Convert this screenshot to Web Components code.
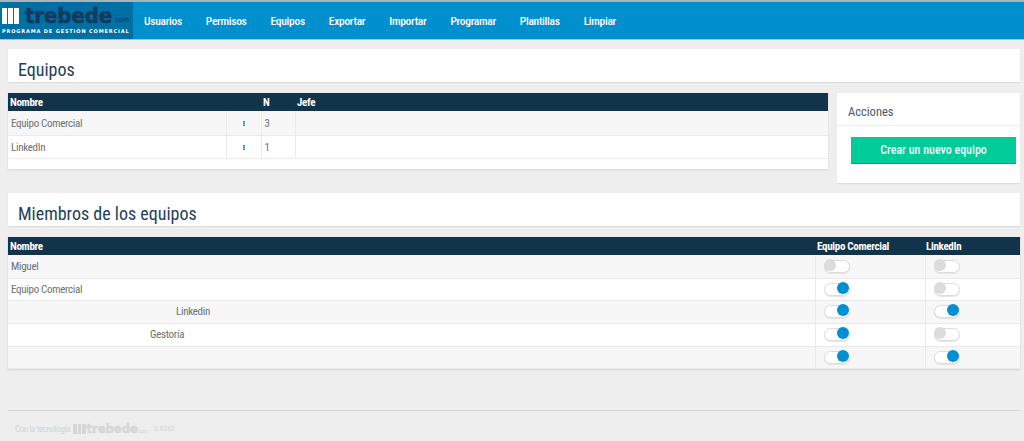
<!DOCTYPE html>
<html lang="es">
<head>
<meta charset="utf-8">
<title>Equipos</title>
<style>
    html, body { margin: 0; background: #eeeeee; }
    body { font-family: Roboto, "Liberation Sans", sans-serif; font-stretch: 75%; }
</style>
</head>
<body>
<app-header></app-header>
<main-area>
    <section-title>Equipos</section-title>
    <teams-row>
        <teams-table></teams-table>
        <actions-card slot="side"></actions-card>
    </teams-row>
    <section-title>Miembros de los equipos</section-title>
    <members-table></members-table>
</main-area>
<app-footer></app-footer>

<script>
const condensed = `font-family: Roboto, "Liberation Sans", sans-serif; font-stretch: 75%;`;

class TrebedeLogo extends HTMLElement {
    connectedCallback() {
        this.attachShadow({mode: 'open'});
        this.shadowRoot.innerHTML = `
        <style>
            :host { display: flex; align-items: flex-end; color: var(--logo-color, #123a5c); font-family: "DejaVu Sans", sans-serif; }
            #bars { display: flex; gap: var(--bar-gap, 1px); margin-right: var(--gap, 6px); }
            #bars i { display: block; width: var(--bar-w, 5px); height: var(--bar-h, 16px); background: var(--bar-color, #fff); }
            b { font-size: var(--size, 22px); line-height: var(--bar-h, 16px); font-weight: 700; letter-spacing: var(--ls, -.1px); -webkit-text-stroke: var(--stroke, .5px) currentColor; }
            small { font-size: var(--com, 8px); line-height: 1; margin-left: 1px; font-family: Roboto, sans-serif; font-stretch: 75%; }
        </style>
        <span id="bars"><i></i><i></i><i></i></span><b>trebede</b><small>.com</small>`;
    }
}

class AppHeader extends HTMLElement {
    connectedCallback() {
        this.attachShadow({mode: 'open'});
        const items = ['Usuarios', 'Permisos', 'Equipos', 'Exportar', 'Importar', 'Programar', 'Plantillas', 'Limpiar'];
        this.shadowRoot.innerHTML = `
        <style>
            :host { display: flex; height: 37px; background: #0090cd; border-top: 2px solid #a9b4ba; border-bottom: 1px solid #a4c4d4; ${condensed} }
            #brand { width: 133px; box-sizing: border-box; background: #006fa3; padding: 6px 0 0 2px; overflow: hidden; }
            #brand p { margin: 4px 0 0; font: 700 5px "DejaVu Sans", sans-serif; letter-spacing: .85px; color: #fff; white-space: nowrap; }
            nav { display: flex; align-items: center; gap: 24px; padding-left: 11px; }
            a { color: #fff; font-size: 11.5px; letter-spacing: -.3px; font-weight: 500; text-decoration: none; }
        </style>
        <div id="brand"><trebede-logo></trebede-logo><p>PROGRAMA DE GESTIÓN COMERCIAL</p></div>
        <nav>${items.map(i => `<a href="#">${i}</a>`).join('')}</nav>`;
    }
}

class MainArea extends HTMLElement {
    connectedCallback() {
        this.attachShadow({mode: 'open'});
        this.shadowRoot.innerHTML = `
        <style>
            :host { display: flex; flex-direction: column; padding: 9px 4px 0 8px; }
        </style>
        <slot></slot>`;
    }
}

class SectionTitle extends HTMLElement {
    connectedCallback() {
        this.attachShadow({mode: 'open'});
        this.shadowRoot.innerHTML = `
        <style>
            :host { display: block; height: 33px; margin-bottom: 11px; box-sizing: border-box; padding: 0 10px; background: #fff; box-shadow: 0 1px 1px #ddd; color: #1f4058; font-size: 18px; line-height: 42px; overflow: hidden; ${condensed} font-stretch: 87%; }
        </style>
        <slot></slot>`;
    }
}

class TeamsRow extends HTMLElement {
    connectedCallback() {
        this.attachShadow({mode: 'open'});
        this.shadowRoot.innerHTML = `
        <style>
            :host { display: flex; align-items: flex-start; gap: 9px; margin-bottom: 10px; }
            ::slotted(teams-table) { flex: 0 0 820px; }
            ::slotted(actions-card) { flex: 1; }
        </style>
        <slot></slot><slot name="side"></slot>`;
    }
}

const tableStyle = `
    table { border-collapse: collapse; width: 100%; table-layout: fixed; ${condensed} font-size: 11px; letter-spacing: -.3px; color: #6f6f6f; }
    th { height: 18px; padding: 0 2px; background: #12344b; color: #fff; font-weight: 700; text-align: left; }
    td { padding: 0 2px 0 3px; border: 1px solid #eaeaea; border-width: 0 1px 1px 0; }
    td:last-child { border-right: 0; }
    tbody tr:nth-child(odd) td { background: #f7f7f7; }
    tbody tr:nth-child(even) td { background: #fff; }
`;

class TeamsTable extends HTMLElement {
    connectedCallback() {
        this.attachShadow({mode: 'open'});
        const teams = [['Equipo Comercial', 3, 24], ['LinkedIn', 1, 23]];
        this.shadowRoot.innerHTML = `
        <style>
            :host { display: block; background: #fff; padding-bottom: 10px; box-shadow: 0 1px 2px #d8d8d8; }
            ${tableStyle}
            td { padding-top: 1px; }
            #dots { display: block; width: 2px; height: 5px; margin: 0 auto; background: repeating-linear-gradient(#0f9be0 0 1px, #6cc4ee 1px 2px); }
        </style>
        <table>
            <colgroup><col style="width:218px"><col style="width:35px"><col style="width:34px"><col></colgroup>
            <thead><tr><th>Nombre</th><th></th><th>N</th><th>Jefe</th></tr></thead>
            <tbody>
            ${teams.map(t => `<tr style="height:${t[2]}px"><td>${t[0]}</td><td><span id="dots"></span></td><td>${t[1]}</td><td></td></tr>`).join('')}
            </tbody>
        </table>`;
    }
}

class ActionsCard extends HTMLElement {
    connectedCallback() {
        this.attachShadow({mode: 'open'});
        this.shadowRoot.innerHTML = `
        <style>
            :host { display: block; height: 90px; background: #fff; box-shadow: 0 1px 1px #ddd; ${condensed} }
            h3 { margin: 0; height: 33px; box-sizing: border-box; padding: 11px 0 0 11px; font-size: 12.5px; line-height: 15px; font-weight: 400; color: #4a5a66; border-bottom: 1px solid #eee; }
            div { padding: 11px 4px 0 14px; }
            button { display: block; width: 100%; height: 27px; border: 0; border-bottom: 1px solid #00a67c; background: #00cc99; color: #eafff8; font: 500 12px Roboto, sans-serif; font-stretch: 75%; }
        </style>
        <h3>Acciones</h3>
        <div><button type="button">Crear un nuevo equipo</button></div>`;
    }
}

class ToggleSwitch extends HTMLElement {
    connectedCallback() {
        this.attachShadow({mode: 'open'});
        this.shadowRoot.innerHTML = `
        <style>
            :host { display: block; position: relative; width: 24px; height: 11px; margin-left: 5px; background: #fff; border: 1px solid #dcdcdc; border-radius: 7px; box-shadow: 0 1px 1px #e4e4e4; }
            i { position: absolute; top: -2px; left: -1px; width: 12px; height: 12px; border-radius: 50%; background: #dcdcdc; }
            :host([on]) i { left: 12px; background: #0090d2; }
        </style>
        <i></i>`;
    }
}

class MembersTable extends HTMLElement {
    connectedCallback() {
        this.attachShadow({mode: 'open'});
        const rows = [
            ['Miguel', 0, 0, 0, 23],
            ['Equipo Comercial', 0, 1, 0, 22],
            ['Linkedin', 165, 1, 1, 23],
            ['Gestoría', 139, 1, 0, 23],
            ['', 0, 1, 1, 22]
        ];
        const toggle = on => `<toggle-switch${on ? ' on' : ''}></toggle-switch>`;
        this.shadowRoot.innerHTML = `
        <style>
            :host { display: block; box-shadow: 0 1px 2px #d0d0d0; }
            ${tableStyle}
            th:last-child { padding-left: 1px; }
        </style>
        <table>
            <colgroup><col><col style="width:110px"><col style="width:95px"></colgroup>
            <thead><tr><th>Nombre</th><th>Equipo Comercial</th><th>LinkedIn</th></tr></thead>
            <tbody>
            ${rows.map(r => `<tr style="height:${r[4]}px"><td style="padding-left:${3 + r[1]}px">${r[0]}</td><td>${toggle(r[2])}</td><td>${toggle(r[3])}</td></tr>`).join('')}
            </tbody>
        </table>`;
    }
}

class AppFooter extends HTMLElement {
    connectedCallback() {
        this.attachShadow({mode: 'open'});
        this.shadowRoot.innerHTML = `
        <style>
            :host { display: flex; align-items: center; margin: 41px 4px 0 8px; height: 30px; box-sizing: border-box; padding: 7px 0 0 7px; border-top: 1px solid #d6d6d6; color: #d4d4d4; font-size: 9px; letter-spacing: -.4px; ${condensed} }
            trebede-logo { margin: 0 7px 0 3px; --gap: 1px; --logo-color: #d6d6d6; --bar-color: #d6d6d6; --size: 13px; --bar-h: 10px; --bar-w: 3.5px; --bar-gap: 1px; --com: 5px; --stroke: .4px; --ls: -.1px; }
            small { font-size: 7.5px; letter-spacing: 0; }
        </style>
        <span>Con la tecnología</span><trebede-logo></trebede-logo><small>0.0262</small>`;
    }
}

customElements.define('trebede-logo', TrebedeLogo);
customElements.define('app-header', AppHeader);
customElements.define('main-area', MainArea);
customElements.define('section-title', SectionTitle);
customElements.define('teams-row', TeamsRow);
customElements.define('teams-table', TeamsTable);
customElements.define('actions-card', ActionsCard);
customElements.define('toggle-switch', ToggleSwitch);
customElements.define('members-table', MembersTable);
customElements.define('app-footer', AppFooter);
</script>
</body>
</html>
